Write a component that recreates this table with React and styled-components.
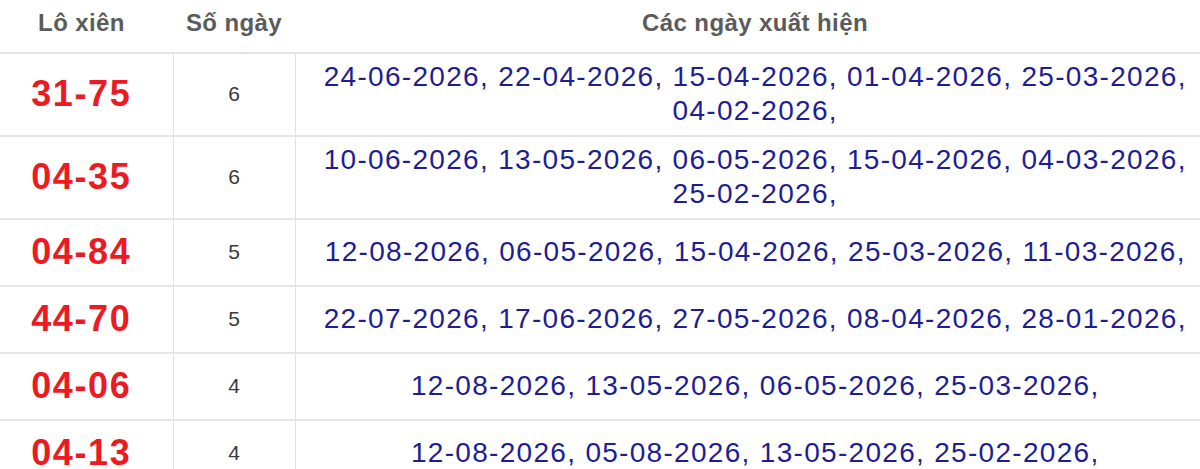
import React from 'react';
import styled, {createGlobalStyle} from 'styled-components';

const GlobalStyle = createGlobalStyle`
  html, body {
    margin: 0;
    padding: 0;
    background: #fff;
    overflow: hidden;
  }
  body {
    font-family: "Liberation Sans", Arial, sans-serif;
  }
`;

const rows = [
  {pair: '31-75', count: 6, dates: ['24-06-2026', '22-04-2026', '15-04-2026', '01-04-2026', '25-03-2026', '04-02-2026']},
  {pair: '04-35', count: 6, dates: ['10-06-2026', '13-05-2026', '06-05-2026', '15-04-2026', '04-03-2026', '25-02-2026']},
  {pair: '04-84', count: 5, dates: ['12-08-2026', '06-05-2026', '15-04-2026', '25-03-2026', '11-03-2026']},
  {pair: '44-70', count: 5, dates: ['22-07-2026', '17-06-2026', '27-05-2026', '08-04-2026', '28-01-2026']},
  {pair: '04-06', count: 4, dates: ['12-08-2026', '13-05-2026', '06-05-2026', '25-03-2026']},
  {pair: '04-13', count: 4, dates: ['12-08-2026', '05-08-2026', '13-05-2026', '25-02-2026']},
];

export default function App () {
  return (
    <>
      <GlobalStyle />
      <Wrapper>
        <Table>
          <colgroup>
            <col style={{width: 183}} />
            <col style={{width: 122}} />
            <col />
          </colgroup>
          <thead>
            <tr>
              <HeadCell>Lô xiên</HeadCell>
              <HeadCell>Số ngày</HeadCell>
              <HeadCell>Các ngày xuất hiện</HeadCell>
            </tr>
          </thead>
          <tbody>
            {rows.map(r => (
              <Row key={r.pair}>
                <PairCell>{r.pair}</PairCell>
                <CountCell>{r.count}</CountCell>
                <DatesCell>
                  {r.dates.map(d => (
                    <React.Fragment key={d}>
                      <DateItem>{d},</DateItem>{' '}
                    </React.Fragment>
                  ))}
                </DatesCell>
              </Row>
            ))}
          </tbody>
        </Table>
      </Wrapper>
    </>
  );
}

const Wrapper = styled.div`
  width: 1200px;
  height: 469px;
  overflow: hidden;
`;

const Table = styled.table`
  margin-left: -10px;
  width: 1225px;
  border-collapse: collapse;
  table-layout: fixed;
`;

const HeadCell = styled.th`
  height: 53px;
  padding: 0 0 6px;
  box-sizing: border-box;
  text-align: center;
  vertical-align: middle;
  font-size: 24px;
  font-weight: bold;
  letter-spacing: 0.4px;
  color: #5b5b5b;
  border-bottom: 2px solid #e4e4e4;
`;

const Row = styled.tr`
  td {
    border-bottom: 2px solid #e6e6e6;
    border-left: 1px solid #e2e2e2;
    height: 67px;
    box-sizing: border-box;
    padding: 6px 4px 7px;
    text-align: center;
    vertical-align: middle;
  }
  td:first-child {
    border-left: none;
  }
`;

const PairCell = styled.td`
  font-size: 36px;
  font-weight: bold;
  letter-spacing: 1.6px;
  color: #ec1a22;
`;

const CountCell = styled.td`
  font-size: 21px;
  color: #3a3a3a;
`;

const DatesCell = styled.td`
  font-size: 28px;
  line-height: 34px;
  letter-spacing: 1.3px;
  color: #1e1e92;
`;

const DateItem = styled.span`
  white-space: nowrap;
`;
